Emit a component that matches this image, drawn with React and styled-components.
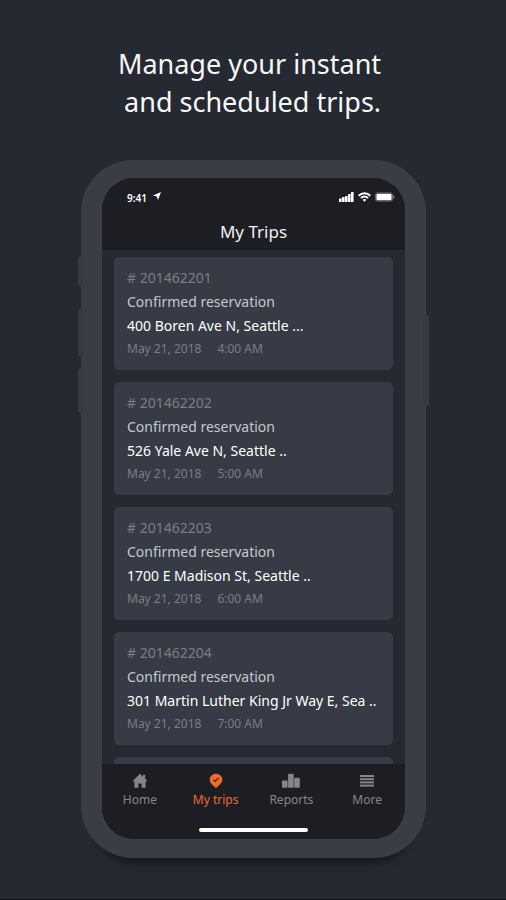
import React from "react";
import styled, { createGlobalStyle } from "styled-components";

const GlobalStyle = createGlobalStyle`
  *, *::before, *::after { box-sizing: border-box; }
  body { margin: 0; background: #252932; }
  h1, h2, p, ul { margin: 0; padding: 0; }
  ul { list-style: none; }
`;

const Page = styled.main`
  min-height: 100vh;
  padding: 45px 80px 41px 81px;
  background: #252932;
  border-bottom: 1px solid #17171f;
  font-family: "Noto Sans", "Open Sans", sans-serif;
  color: #fff;
`;

const Headline = styled.h1`
  width: fit-content;
  margin: 0 auto 39px;
  padding-right: 8px;
  font-size: 27px;
  line-height: 38px;
  font-weight: 400;
  text-align: right;
  color: #f7f7f8;
  white-space: nowrap;
`;

const Phone = styled.div`
  position: relative;
  padding: 18px 21px 19px;
  border-radius: 52px;
  background: #3a3d46;
  box-shadow: 0 22px 8px -17px #15171c;
`;

const SideButton = styled.span`
  position: absolute;
  ${(p) => p.$side}: -3px;
  top: ${(p) => p.$top}px;
  width: 6px;
  height: ${(p) => p.$length}px;
  border-radius: 2px;
  background: #373a43;
`;

const Screen = styled.div`
  position: relative;
  display: flex;
  flex-direction: column;
  height: 661px;
  border-radius: 32px;
  overflow: hidden;
  background: #252932;
`;

const Header = styled.header`
  flex: none;
  height: 72px;
  padding: 12px 10px 0 25px;
  background: #1d1e23;
`;

const StatusBar = styled.div`
  display: flex;
  justify-content: space-between;
  height: 28px;
`;

const StatusGroup = styled.div`
  display: flex;
  align-items: flex-start;
  gap: ${(p) => p.$gap}px;
  padding-top: ${(p) => p.$drop || 0}px;
`;

const Clock = styled.span`
  font-size: 10px;
  line-height: 16px;
  font-weight: 600;
`;

const Title = styled.h2`
  padding-right: 15px;
  font-size: 17px;
  line-height: 28px;
  font-weight: 400;
  text-align: center;
  color: #f0f0f1;
`;

const TripList = styled.ul`
  flex: 1;
  min-height: 0;
  display: flex;
  flex-direction: column;
  gap: 12px;
  padding: 7px 12px 0;
  overflow: hidden;
`;

const TripCard = styled.li`
  flex: none;
  height: 113px;
  padding: 9px 13px;
  border-radius: 5px;
  background: #363b45;
  white-space: nowrap;
`;

const TripNumber = styled.p`
  font-size: 14px;
  line-height: 24px;
  color: #7b7e86;
`;

const TripStatus = styled.p`
  font-size: 14px;
  line-height: 24px;
  color: #c6c8cd;
`;

const TripAddress = styled.p`
  font-size: 14px;
  line-height: 24px;
  color: #fff;
`;

const TripTime = styled.p`
  display: flex;
  gap: 16px;
  font-size: 12px;
  line-height: 22px;
  color: #7b7e86;
`;

const TabBar = styled.nav`
  flex: none;
  display: grid;
  grid-template-columns: repeat(4, 1fr);
  align-content: start;
  height: 75px;
  padding-top: 9px;
  background: #1d1e23;
`;

const Tab = styled.button`
  display: flex;
  flex-direction: column;
  align-items: center;
  gap: 2px;
  padding: 0;
  border: 0;
  background: none;
  font: inherit;
  font-size: 12px;
  line-height: 18px;
  color: ${(p) => (p.$active ? "#f2692e" : "#85868a")};
  cursor: pointer;
`;

const HomeIndicator = styled.span`
  position: absolute;
  bottom: 7px;
  left: 50%;
  width: 109px;
  height: 4px;
  margin-left: -55px;
  border-radius: 2px;
  background: #fff;
`;

const Icon = styled.svg`
  display: block;
  fill: currentColor;
`;

const trips = [
  { number: "201462201", address: "400 Boren Ave N, Seattle ...", time: "4:00 AM" },
  { number: "201462202", address: "526 Yale Ave N, Seattle ..", time: "5:00 AM" },
  { number: "201462203", address: "1700 E Madison St, Seattle ..", time: "6:00 AM" },
  { number: "201462204", address: "301 Martin Luther King Jr Way E, Sea ..", time: "7:00 AM" },
];

const HomeIcon = () => (
  <Icon width="18" height="16" viewBox="0 0 18 16" aria-hidden="true">
    <path d="M9 .8 16.6 8.2H14.6V14.8H10.6V10.4H7.4V14.8H3.4V8.2H1.4Z" />
    <path d="M12 1.8H14.2V6.6L12 4.5Z" />
  </Icon>
);

const PinIcon = () => (
  <Icon width="18" height="16" viewBox="0 0 18 16" aria-hidden="true">
    <path d="M9 .8C5.5 .8 2.7 3.4 2.7 6.8C2.7 10 5.7 12 9 15.2C12.3 12 15.3 10 15.3 6.8C15.3 3.4 12.5 .8 9 .8Z" />
    <path d="M6.4 6.6 8.3 8.2 11.6 5" fill="none" stroke="#5a2c1b" strokeWidth="1.5" />
  </Icon>
);

const ReportsIcon = () => (
  <Icon width="20" height="16" viewBox="0 0 20 16" aria-hidden="true">
    <rect x="1" y="7.6" width="5.6" height="7.2" rx="1" />
    <rect x="7.1" y=".8" width="5.6" height="14" rx="1" />
    <rect x="13.2" y="4.8" width="5.6" height="10" rx="1" />
  </Icon>
);

const MoreIcon = () => (
  <Icon width="16" height="16" viewBox="0 0 16 16" aria-hidden="true">
    <rect x="1" y="2" width="14" height="2" />
    <rect x="1" y="5.2" width="14" height="2" />
    <rect x="1" y="8.4" width="14" height="2" />
    <rect x="1" y="11.6" width="14" height="2" />
  </Icon>
);

const tabs = [
  { label: "Home", Glyph: HomeIcon },
  { label: "My trips", Glyph: PinIcon, active: true },
  { label: "Reports", Glyph: ReportsIcon },
  { label: "More", Glyph: MoreIcon },
];

const LocationIcon = () => (
  <Icon width="8" height="8" viewBox="0 0 8 8" aria-hidden="true">
    <path d="M8 0 5 8 3.8 4.4 0 3.4Z" />
  </Icon>
);

const SignalIcon = () => (
  <Icon width="15" height="10" viewBox="0 0 15 10" aria-hidden="true">
    <rect x="0" y="6.5" width="2.6" height="3.5" rx=".5" />
    <rect x="3" y="5" width="2.6" height="5" rx=".5" />
    <rect x="6" y="4" width="2.6" height="6" rx=".5" />
    <rect x="9" y="2" width="2.6" height="8" rx=".5" />
    <rect x="12" y="0" width="2.6" height="10" rx=".5" />
  </Icon>
);

const WifiIcon = () => (
  <Icon width="13" height="10" viewBox="0 0 13 10" aria-hidden="true">
    <g fill="none" stroke="currentColor" strokeWidth="2">
      <path d="M.7 3.7C4 .3 9 .3 12.3 3.7" />
      <path d="M2.9 6.1C5 4.1 8 4.1 10.1 6.1" />
    </g>
    <path d="M4.6 7.7C5.7 6.8 7.3 6.8 8.4 7.7L6.5 9.8Z" />
  </Icon>
);

const BatteryIcon = () => (
  <Icon width="20" height="10" viewBox="0 0 20 10" aria-hidden="true">
    <rect x=".5" y=".9" width="17" height="8.2" rx="2" fill="none" stroke="#66676b" />
    <rect x="1.4" y="1.8" width="15.2" height="6.4" rx="1" />
    <path d="M18.4 3.3C19.8 4 19.8 6 18.4 6.7Z" fill="#a9aaad" />
  </Icon>
);

export default function App() {
  return (
    <>
      <GlobalStyle />
      <Page>
        <Headline>
          Manage your instant
          <br />
          and scheduled trips.
        </Headline>
        <Phone>
          <SideButton $side="left" $top={96} $length={30} />
          <SideButton $side="left" $top={149} $length={47} />
          <SideButton $side="left" $top={208} $length={45} />
          <SideButton $side="right" $top={155} $length={91} />
          <Screen>
            <Header>
              <StatusBar>
                <StatusGroup $gap={6}>
                  <Clock>9:41</Clock>
                  <StatusGroup $drop={2}>
                    <LocationIcon />
                  </StatusGroup>
                </StatusGroup>
                <StatusGroup $gap={4} $drop={2}>
                  <SignalIcon />
                  <WifiIcon />
                  <BatteryIcon />
                </StatusGroup>
              </StatusBar>
              <Title>My Trips</Title>
            </Header>
            <TripList>
              {trips.map((trip) => (
                <TripCard key={trip.number}>
                  <TripNumber># {trip.number}</TripNumber>
                  <TripStatus>Confirmed reservation</TripStatus>
                  <TripAddress>{trip.address}</TripAddress>
                  <TripTime>
                    <span>May 21, 2018</span>
                    <span>{trip.time}</span>
                  </TripTime>
                </TripCard>
              ))}
              <TripCard aria-hidden="true" />
            </TripList>
            <TabBar>
              {tabs.map(({ label, Glyph, active }) => (
                <Tab key={label} type="button" $active={active} aria-current={active ? "page" : undefined}>
                  <Glyph />
                  {label}
                </Tab>
              ))}
            </TabBar>
            <HomeIndicator />
          </Screen>
        </Phone>
      </Page>
    </>
  );
}
